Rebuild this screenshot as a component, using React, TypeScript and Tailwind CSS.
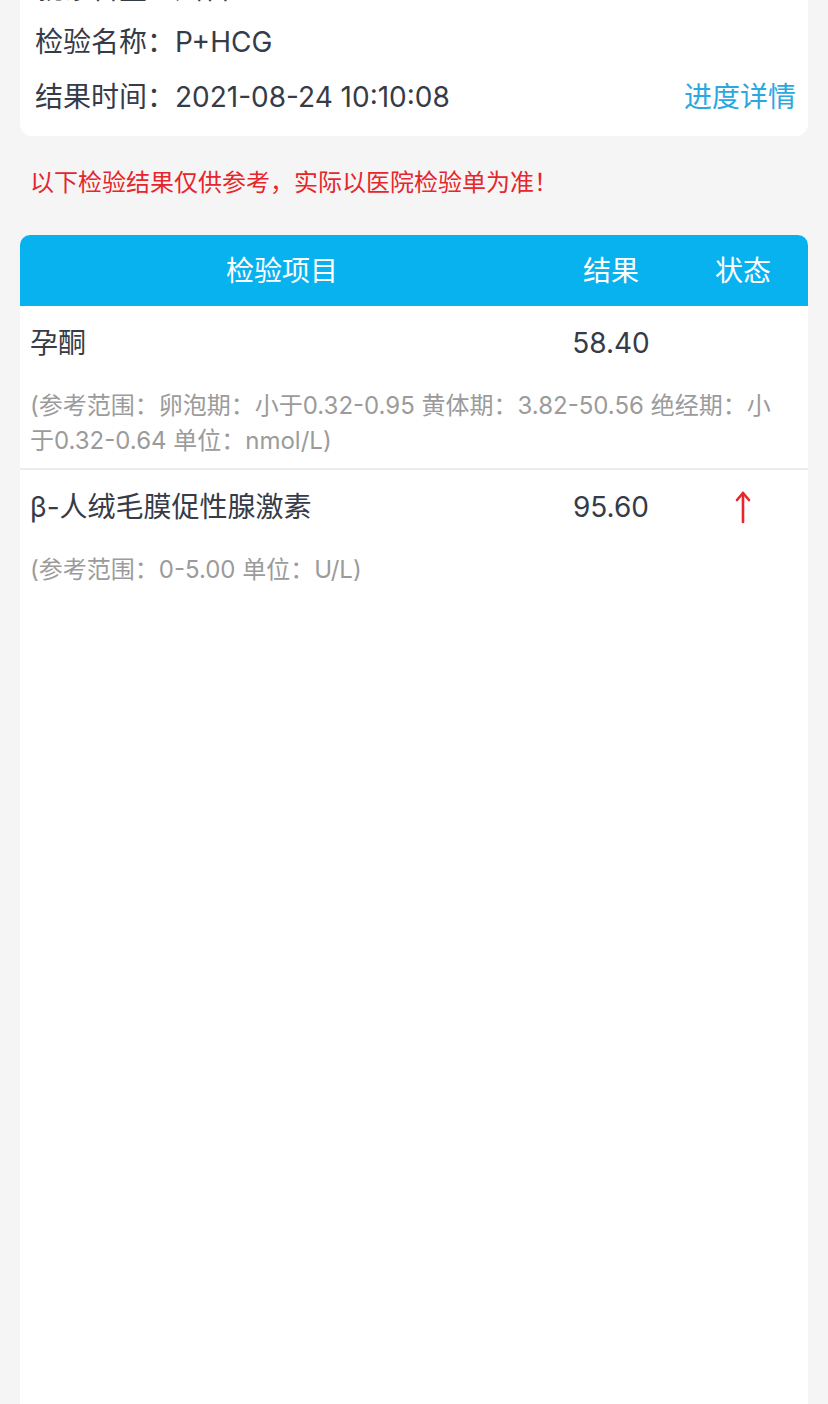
import React from "react";

type Item = {
  name: string;
  value: string;
  ref: string;
  high?: boolean;
};

const items: Item[] = [
  {
    name: "孕酮",
    value: "58.40",
    ref: "(参考范围：卵泡期：小于0.32-0.95 黄体期：3.82-50.56 绝经期：小于0.32-0.64 单位：nmol/L)",
  },
  {
    name: "β-人绒毛膜促性腺激素",
    value: "95.60",
    ref: "(参考范围：0-5.00 单位：U/L)",
    high: true,
  },
];

function UpArrow() {
  return (
    <svg width="16" height="34" viewBox="0 0 16 34" fill="none" stroke="#e6262c" strokeWidth="2.6" strokeLinecap="round" strokeLinejoin="round">
      <path d="M8 3v29" />
      <path d="M2 10l6-7 6 7" />
    </svg>
  );
}

export default function App() {
  return (
    <div
      className="min-h-screen bg-[#f5f5f5] px-5 text-[#363b48]"
      style={{ fontFamily: 'Inter, "Noto Sans CJK SC", "Noto Sans", sans-serif' }}
    >
      {/* Info card, top row cut by the viewport */}
      <div className="-mt-[36px] rounded-b-xl bg-white pl-[15px] pr-3 pb-[12px] text-[28px]">
        <div className="flex h-[50px] items-center">就诊科室：妇科</div>
        <div className="flex h-[55px] items-center">检验名称：P+HCG</div>
        <div className="flex h-[55px] items-center justify-between">
          <span>结果时间：2021-08-24 10:10:08</span>
          <span className="text-[#2ba8e0]">进度详情</span>
        </div>
      </div>

      <p className="mt-[31px] mb-[36px] pl-[10px] text-[24px] leading-[32px] text-[#e6262c]">
        以下检验结果仅供参考，实际以医院检验单为准！
      </p>

      {/* Results table */}
      <div className="min-h-[1200px] overflow-hidden rounded-t-[10px] bg-white">
        <div className="grid h-[71px] grid-cols-[524px_134px_1fr] items-center bg-[#08b2ef] text-[28px] text-white">
          <div className="text-center">检验项目</div>
          <div className="text-center">结果</div>
          <div className="text-center">状态</div>
        </div>

        {items.map((it, i) => (
          <div
            key={it.name}
            className={`pl-[10px] pr-5 pt-4 pb-[10px] ${i < items.length - 1 ? "border-b-2 border-[#ececec]" : ""}`}
          >
            <div className="-ml-[10px] -mr-5 grid h-10 grid-cols-[524px_134px_1fr] items-center text-[28px]">
              <div className="pl-[10px]">{it.name}</div>
              <div className="text-center">{it.value}</div>
              <div className="flex justify-center">{it.high && <UpArrow />}</div>
            </div>
            <p className="mt-[26px] text-[24px] leading-[35px] text-[#9b9b9b]">{it.ref}</p>
          </div>
        ))}
      </div>
    </div>
  );
}
